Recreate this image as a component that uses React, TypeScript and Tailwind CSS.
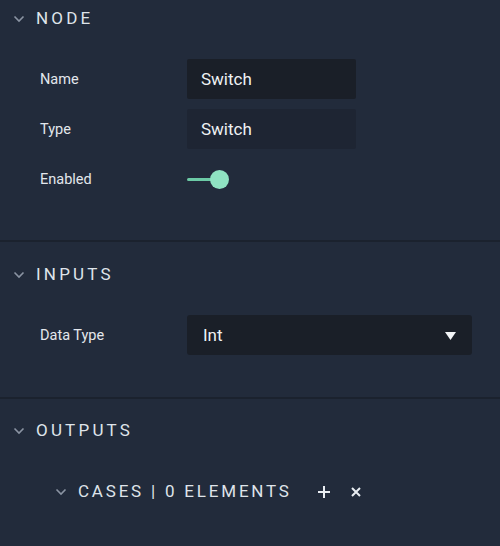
import React from "react";

const Chevron = ({ className = "" }: { className?: string }) => (
  <svg width="12" height="8" viewBox="0 0 12 8" className={className} fill="none">
    <path d="M1.5 1.5 L6 6 L10.5 1.5" stroke="#8b94a3" strokeWidth="1.6" />
  </svg>
);

const Header = ({ title }: { title: string }) => (
  <div className="flex h-[36px] items-center">
    <div className="flex w-[36px] justify-center pl-[1px]">
      <Chevron />
    </div>
    <span className="text-[17px] tracking-[3.2px] text-[#dfe4ea]">{title}</span>
  </div>
);

const Row = ({ label, children }: { label: string; children: React.ReactNode }) => (
  <div className="flex h-[40px] items-center">
    <div className="w-[187px] shrink-0 pl-[40px] pt-[2px] text-[14.5px] text-[#e3e7ec]">{label}</div>
    {children}
  </div>
);

export default function App() {
  return (
    <div
      className="h-[546px] w-[500px] overflow-hidden bg-[#222b3b] pt-[1px]"
      style={{ fontFamily: "Roboto, 'Noto Sans', sans-serif" }}
    >
      {/* NODE */}
      <div className="pb-[41px]">
        <Header title="NODE" />
        <div className="mt-[22px] flex flex-col gap-[10px]">
          <Row label="Name">
            <div className="flex h-[40px] w-[169px] items-center rounded-[2px] bg-[#1a1f28] pl-[14px] pt-[1px] text-[17px] text-[#eef1f4]">
              Switch
            </div>
          </Row>
          <Row label="Type">
            <div className="flex h-[40px] w-[169px] items-center rounded-[2px] bg-[#1e2533] pl-[14px] pt-[1px] text-[17px] text-[#eef1f4]">
              Switch
            </div>
          </Row>
          <Row label="Enabled">
            <div className="flex items-center">
              <div className="h-[3px] w-[26px] rounded-full bg-[#6ccaa6]" />
              <div className="-ml-[3px] h-[19px] w-[19px] rounded-full bg-[#8fe3c2]" />
            </div>
          </Row>
        </div>
      </div>
      <div className="h-[2px] bg-[#1b222e]" />

      {/* INPUTS */}
      <div className="pb-[42px] pt-[15px]">
        <Header title="INPUTS" />
        <div className="mt-[22px]">
          <Row label="Data Type">
            <div className="flex h-[40px] w-[285px] items-center justify-between rounded-[3px] bg-[#1a1f28] pl-[16px] pr-[16px] pt-[1px] text-[17px] text-[#eef1f4]">
              <span>Int</span>
              <svg width="11" height="8" viewBox="0 0 11 8">
                <path d="M0 0 H11 L5.5 8 Z" fill="#f2f4f7" />
              </svg>
            </div>
          </Row>
        </div>
      </div>
      <div className="h-[2px] bg-[#1b222e]" />

      {/* OUTPUTS */}
      <div className="pt-[14px]">
        <Header title="OUTPUTS" />
        <div className="mt-[23px] flex h-[40px] items-center pl-[55px]">
          <Chevron />
          <span className="ml-[11px] text-[17px] tracking-[2.8px] text-[#dfe4ea]">
            CASES | 0 ELEMENTS
          </span>
          <svg width="12" height="12" viewBox="0 0 12 12" className="ml-[26px]">
            <path d="M6 0 V12 M0 6 H12" stroke="#e9edf2" strokeWidth="2" />
          </svg>
          <svg width="10" height="10" viewBox="0 0 10 10" className="ml-[21px]">
            <path d="M1 1 L9 9 M9 1 L1 9" stroke="#e9edf2" strokeWidth="2" />
          </svg>
        </div>
      </div>
    </div>
  );
}
